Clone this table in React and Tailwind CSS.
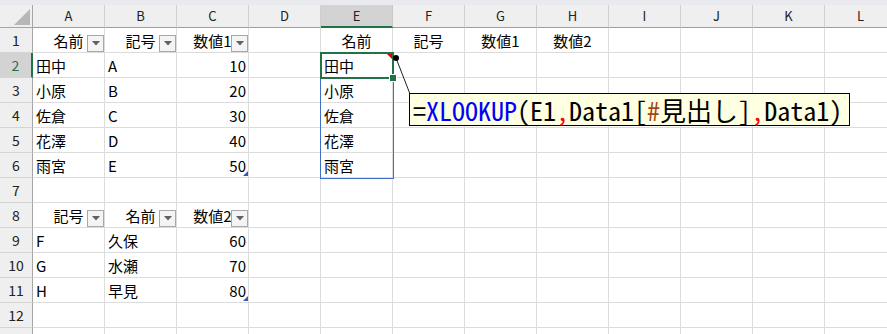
import React from "react";

const COLS = ["A", "B", "C", "D", "E", "F", "G", "H", "I", "J", "K", "L"];
const ROWS = Array.from({ length: 13 }, (_, i) => i + 1);

const data = {
  "1A": { t: "名前", f: true },
  "1B": { t: "記号", f: true },
  "1C": { t: "数値1", f: true },
  "1E": { t: "名前", c: true },
  "1F": { t: "記号", c: true },
  "1G": { t: "数値1", c: true },
  "1H": { t: "数値2", c: true },
  "2A": { t: "田中" }, "2B": { t: "A" }, "2C": { t: "10", r: true }, "2E": { t: "田中" },
  "3A": { t: "小原" }, "3B": { t: "B" }, "3C": { t: "20", r: true }, "3E": { t: "小原" },
  "4A": { t: "佐倉" }, "4B": { t: "C" }, "4C": { t: "30", r: true }, "4E": { t: "佐倉" },
  "5A": { t: "花澤" }, "5B": { t: "D" }, "5C": { t: "40", r: true }, "5E": { t: "花澤" },
  "6A": { t: "雨宮" }, "6B": { t: "E" }, "6C": { t: "50", r: true, m: true }, "6E": { t: "雨宮" },
  "8A": { t: "記号", f: true },
  "8B": { t: "名前", f: true },
  "8C": { t: "数値2", f: true },
  "9A": { t: "F" }, "9B": { t: "久保" }, "9C": { t: "60", r: true },
  "10A": { t: "G" }, "10B": { t: "水瀬" }, "10C": { t: "70", r: true },
  "11A": { t: "H" }, "11B": { t: "早見" }, "11C": { t: "80", r: true, m: true },
};

function FilterButton() {
  return (
    <div className="absolute right-0 bottom-0 w-[17px] h-[17px] border border-[#a8a8a8] bg-[#f4f4f4] flex items-center justify-center">
      <svg width="8" height="5" viewBox="0 0 8 5">
        <polygon points="0,0 8,0 4,4.5" fill="#606060" />
      </svg>
    </div>
  );
}

function Cell({ row, col }) {
  const d = data[`${row}${col}`];
  const justify = d ? (d.f || d.c ? "justify-center" : d.r ? "justify-end pr-[2px]" : "justify-start pl-[3px]") : "";
  return (
    <div className={`relative flex items-center border-r border-b border-[#dcdcdc] bg-white text-[15px] text-black whitespace-nowrap ${justify}`}>
      {d && <span className="leading-none">{d.t}</span>}
      {d && d.f && <FilterButton />}
      {d && d.m && (
        <svg className="absolute right-0 bottom-[1px]" width="5" height="5" viewBox="0 0 5 5">
          <polygon points="5,0 5,5 0,5" fill="#3a55b4" />
        </svg>
      )}
    </div>
  );
}

export default function App() {
  return (
    <div
      className="relative w-[887px] h-[334px] overflow-hidden bg-white"
      style={{ fontFamily: '"Noto Sans CJK JP", "Noto Sans", sans-serif' }}
    >
      <div className="h-[5px] bg-[#e8eaed]" />
      <div className="grid grid-cols-[33px_repeat(12,72px)] grid-rows-[23px_repeat(13,25px)] w-[897px]">
        {/* corner */}
        <div className="relative bg-[#efefef] border-r border-b border-[#a6a6a6]">
          <svg className="absolute left-[14px] top-[4px]" width="17" height="17" viewBox="0 0 17 17">
            <polygon points="16,0 16,16 0,16" fill="#b7b7b7" />
          </svg>
        </div>
        {COLS.map((c) => (
          <div
            key={c}
            className={
              c === "E"
                ? "flex items-center justify-center bg-[#d3d3d3] border-r border-[#c8c8c8] border-b-2 border-b-[#217346] text-[13px] text-[#222]"
                : "flex items-center justify-center bg-[#efefef] border-r border-[#cfcfcf] border-b border-b-[#9e9e9e] text-[13px] text-[#222]"
            }
          >
            {c}
          </div>
        ))}
        {ROWS.map((r) => (
          <React.Fragment key={r}>
            <div
              className={
                r === 2
                  ? "flex items-center justify-center bg-[#d3d3d3] border-r-2 border-r-[#217346] border-b border-b-[#d4d4d4] text-[14px] text-[#217346]"
                  : "flex items-center justify-center bg-[#efefef] border-r border-r-[#a6a6a6] border-b border-b-[#d4d4d4] text-[14px] text-[#222]"
              }
            >
              {r < 13 ? r : ""}
            </div>
            {COLS.map((c) => (
              <Cell key={c} row={r} col={c} />
            ))}
          </React.Fragment>
        ))}
      </div>

      {/* spill range border */}
      <div className="absolute left-[320px] top-[52px] w-[74px] h-[127px] border border-[#3f6fc6] pointer-events-none" />
      {/* active cell */}
      <div className="absolute left-[320px] top-[52px] w-[74px] h-[27px] border-2 border-[#217346] pointer-events-none" />
      <div className="absolute left-[389px] top-[74px] w-[8px] h-[8px] bg-[#217346] border border-white" />
      <svg className="absolute left-[387px] top-[54px]" width="5" height="5" viewBox="0 0 5 5">
        <polygon points="0,0 5,0 5,5" fill="#e00000" />
      </svg>

      {/* callout line */}
      <svg className="absolute left-0 top-0 pointer-events-none" width="887" height="334">
        <line x1="396" y1="58" x2="410" y2="94" stroke="#222" strokeWidth="1" />
        <circle cx="396" cy="58" r="3" fill="#000" />
      </svg>

      {/* tooltip */}
      <div
        className="absolute left-[409px] top-[93px] w-[441px] h-[33px] bg-[#ffffe1] border border-black flex items-center pl-[3px] text-[26px] leading-none whitespace-nowrap text-black"
        style={{ fontFamily: '"Noto Sans Mono CJK JP", "Liberation Mono", monospace' }}
      >
        <span>=</span>
        <span className="text-[#0000ff]">XLOOKUP</span>
        <span>(E1</span>
        <span className="text-[#ff0000]">,</span>
        <span>Data1[</span>
        <span className="text-[#a0461a]">#</span>
        <span>見出し]</span>
        <span className="text-[#ff0000]">,</span>
        <span>Data1)</span>
      </div>
    </div>
  );
}
